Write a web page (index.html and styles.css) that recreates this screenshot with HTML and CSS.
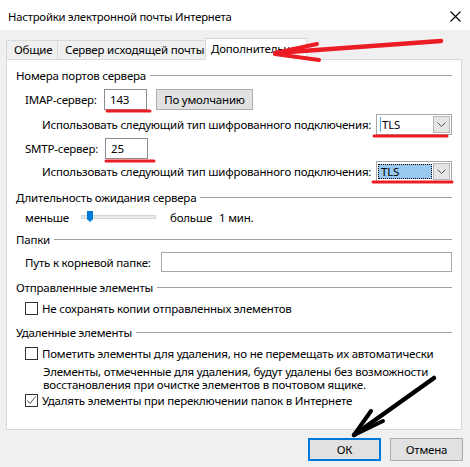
FILE: index.html
```html
<!DOCTYPE html>
<html lang="ru">
<head>
<meta charset="utf-8">
<title>Настройки электронной почты Интернета</title>
<link rel="stylesheet" href="styles.css">
</head>
<body>
<div class="window">
  <div class="titlebar">
    <span class="title">Настройки электронной почты Интернета</span>
    <svg class="close" width="11" height="11" viewBox="0 0 11 11"><path d="M0.5 0.5 L10.5 10.5 M10.5 0.5 L0.5 10.5" stroke="#000" stroke-width="1.1" fill="none"/></svg>
  </div>
  <div class="client">
    <div class="tabs">
      <div class="tab t1">Общие</div>
      <div class="tab t2">Сервер исходящей почты</div>
      <div class="tab t3 active">Дополнительно</div>
    </div>
    <div class="panel">
      <div class="group g1"><span class="glabel">Номера портов сервера</span><span class="gline"></span></div>
      <div class="row imap">
        <span class="lbl lbl-imap">IMAP-сервер:</span>
        <span class="input port">143</span>
        <span class="btn default">По умолчанию</span>
      </div>
      <div class="row enc enc1">
        <span class="enc-text">Использовать следующий тип шифрованного подключения:</span>
        <span class="combo"><span class="combo-val"><span class="caret"></span>TLS</span><span class="drop"><svg width="9" height="5" viewBox="0 0 9 5"><path d="M0.5 0.5 L4.5 4.5 L8.5 0.5" stroke="#555" stroke-width="1" fill="none"/></svg></span></span>
      </div>
      <div class="row smtp">
        <span class="lbl lbl-smtp">SMTP-сервер:</span>
        <span class="input port">25</span>
      </div>
      <div class="row enc enc2">
        <span class="enc-text">Использовать следующий тип шифрованного подключения:</span>
        <span class="combo"><span class="combo-val sel">TLS</span><span class="drop"><svg width="9" height="5" viewBox="0 0 9 5"><path d="M0.5 0.5 L4.5 4.5 L8.5 0.5" stroke="#555" stroke-width="1" fill="none"/></svg></span></span>
      </div>
      <div class="group g2"><span class="glabel">Длительность ожидания сервера</span><span class="gline"></span></div>
      <div class="row slider-row">
        <span class="s-less">меньше</span>
        <span class="track"><span class="thumb"></span></span>
        <span class="s-more">больше</span>
        <span>1 мин.</span>
      </div>
      <div class="group g3"><span class="glabel">Папки</span><span class="gline"></span></div>
      <div class="row path">
        <span class="lbl lbl-path">Путь к корневой папке:</span>
        <span class="input wide"></span>
      </div>
      <div class="group g4"><span class="glabel">Отправленные элементы</span><span class="gline"></span></div>
      <div class="row check c1"><span class="box"></span><span>Не сохранять копии отправленных элементов</span></div>
      <div class="group g5"><span class="glabel">Удаленные элементы</span><span class="gline"></span></div>
      <div class="row check c2"><span class="box"></span><span>Пометить элементы для удаления, но не перемещать их автоматически</span></div>
      <div class="desc">
        <div>Элементы, отмеченные для удаления, будут удалены без возможности</div>
        <div>восстановления при очистке элементов в почтовом ящике.</div>
      </div>
      <div class="row check c3"><span class="box checked"><svg width="11" height="11" viewBox="0 0 11 11"><path d="M1.5 5.5 L4 8.5 L9.5 1.5" stroke="#555" stroke-width="1" fill="none"/></svg></span><span>Удалять элементы при переключении папок в Интернете</span></div>
    </div>
    <div class="footer">
      <span class="btn ok">ОК</span>
      <span class="btn cancel">Отмена</span>
    </div>
  </div>
</div>
<svg class="marks" width="470" height="467" viewBox="0 0 470 467">
  <g stroke="#ec1c24" stroke-linecap="round" fill="none">
    <path d="M107 111 L150 111" stroke-width="3"/>
    <path d="M374 136 L447 136" stroke-width="3"/>
    <path d="M106 161 L154 161" stroke-width="3"/>
    <path d="M373 182 L452 182" stroke-width="3"/>
    <path d="M441 41 L275 53" stroke-width="4.5"/>
    <path d="M275 53 L317 44" stroke-width="4"/>
    <path d="M275 54 L319 60" stroke-width="4"/>
  </g>
  <g stroke="#000" stroke-linecap="round" fill="none">
    <path d="M434 378 L354 435" stroke-width="4.5"/>
    <path d="M354 435 L371 411" stroke-width="4"/>
    <path d="M354 435 L383 421" stroke-width="4"/>
  </g>
</svg>
</body>
</html>
```
FILE: styles.css
```css
* { box-sizing: border-box; }
html, body { margin: 0; padding: 0; }
body {
  width: 470px;
  height: 467px;
  overflow: hidden;
  position: relative;
  background: #f0f0f0;
  font-family: "Noto Sans", "Open Sans", "DejaVu Sans", sans-serif;
  font-size: 11.5px;
  letter-spacing: -0.2px;
  color: #000;
}
.window { width: 470px; height: 467px; display: flex; flex-direction: column; }
.titlebar {
  height: 30px;
  flex-shrink: 0;
  background: #fff;
  display: flex;
  align-items: center;
  padding-left: 8px;
}
.title { margin-top: 2px; white-space: nowrap; font-size: 11.3px; }
.close { margin-left: auto; margin-right: 9px; margin-top: 2px; }

.client { flex: 1; padding-top: 8px; }
.tabs { display: flex; align-items: flex-end; height: 21px; margin-left: 6px; position: relative; z-index: 2; }
.tab {
  height: 19px;
  border: 1px solid #d9d9d9;
  border-bottom: none;
  background: #f0f0f0;
  padding-left: 7px;
  line-height: 17px;
  white-space: nowrap;
  overflow: hidden;
}
.t1 { width: 52px; }
.t2 { width: 148px; border-left: none; }
.tab.active {
  width: 102px;
  height: 22px;
  margin-bottom: -1px;
  background: #fff;
  padding-left: 5px;
  line-height: 20px;
  border-left: 1px solid #d9d9d9;
}
.t3 { margin-left: -1px; }

.panel {
  margin-left: 6px;
  width: 456px;
  height: 371px;
  background: #fff;
  border: 1px solid #d9d9d9;
  padding: 7px 9px 0 0;
  position: relative;
  z-index: 1;
}
.group { display: flex; align-items: center; height: 16px; padding-left: 9px; white-space: nowrap; }
.gline { flex: 1; height: 1px; background: #a0a0a0; margin-left: 4px; }
.g2 { margin-top: 7px; }
.g3 { margin-top: 6px; }
.g4 { margin-top: 7px; }
.g5 { margin-top: 8px; }

.row { display: flex; align-items: center; padding-left: 18px; white-space: nowrap; }
.lbl { flex-shrink: 0; }
.lbl-imap { width: 79px; }
.lbl-smtp { width: 80px; }
.lbl-path { width: 136px; }

.input {
  height: 21px;
  border: 1px solid #8c8c8c;
  background: #fff;
  padding-left: 5px;
  line-height: 19px;
}
.port { width: 43px; }
.imap { margin-top: 6px; height: 21px; }
.smtp { margin-top: 3px; height: 21px; }
.btn {
  display: inline-flex;
  align-items: center;
  justify-content: center;
  background: #e1e1e1;
  border: 1px solid #adadad;
}
.default { width: 97px; height: 21px; margin-left: 9px; }

.enc { padding-left: 35px; height: 21px; padding-right: 0; }
.enc1 { margin-top: 4px; }
.enc2 { margin-top: 2px; }
.combo {
  margin-left: auto;
  width: 76px;
  height: 21px;
  border: 1px solid #a8a8a8;
  background: #fff;
  padding: 1px;
  display: flex;
  gap: 1px;
}
.combo-val { flex: 1; display: flex; align-items: center; padding-left: 2px; }
.caret { width: 1px; height: 15px; background: #5ea6e0; margin-right: 1px; }
.combo-val.sel {
  background: #99c9ef;
  outline: 1px dotted #000;
  outline-offset: -1px;
  padding-left: 3px;
  margin: 1px 0;
}
.drop {
  width: 17px;
  height: 17px;
  background: #e5e5e5;
  border: 1px solid #b8b8b8;
  display: flex;
  align-items: center;
  justify-content: center;
}

.slider-row { margin-top: 4px; height: 16px; }
.s-less { width: 56px; }
.track {
  width: 75px;
  height: 4px;
  background: #e7eaea;
  border: 1px solid #d6d6d6;
  margin-right: 14px;
  position: relative;
}
.thumb {
  position: absolute;
  left: 5px;
  top: -5px;
  width: 6px;
  height: 11px;
  background: #007ad9;
  clip-path: polygon(0 0, 100% 0, 100% 75%, 50% 100%, 0 75%);
}
.s-more { width: 49px; }

.path { margin-top: 5px; height: 20px; }
.wide { width: 294px; height: 20px; border-color: #a8a8a8; }

.check { height: 16px; }
.c1 { margin-top: 5px; }
.c2 { margin-top: 5px; }
.c3 { margin-top: 1px; }
.box {
  width: 13px;
  height: 13px;
  border: 1px solid #333;
  background: #fff;
  margin-right: 4px;
  flex-shrink: 0;
  display: flex;
  align-items: center;
  justify-content: center;
}
.desc { padding-left: 36px; margin-top: 4px; line-height: 13px; white-space: nowrap; }

.footer { display: flex; justify-content: flex-end; gap: 9px; padding-right: 7px; margin-top: 8px; }
.ok, .cancel { width: 73px; height: 23px; }
.ok { border: 2px solid #0078d7; }

.marks { position: absolute; left: 0; top: 0; pointer-events: none; z-index: 5; }
```
